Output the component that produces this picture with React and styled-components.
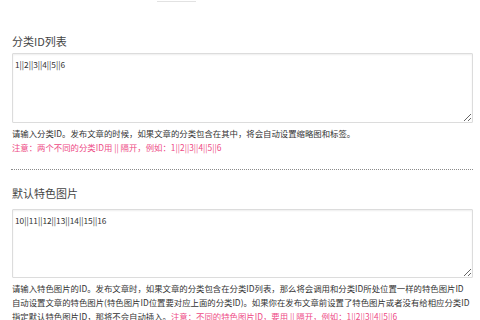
import styled, { createGlobalStyle } from "styled-components"

const GlobalStyle = createGlobalStyle`
	html, body {
		margin: 0;
		padding: 0;
		background: #fff;
	}
	body {
		font-family: "Noto Sans CJK SC", "Noto Sans", sans-serif;
		color: #333;
	}
`

function App() {
	return (
		<Page>
			<GlobalStyle />
			<TopTab />
			<Field>
				<Label $top={32} $gap={5}>分类ID列表</Label>
				<Box defaultValue="1||2||3||4||5||6" $height={70} />
				<Help>
					<Line>请输入分类ID。发布文章的时候，如果文章的分类包含在其中，将会自动设置缩略图和标签。</Line>
					<Line $note>注意：两个不同的分类ID用 || 隔开，例如：1||2||3||4||5||6</Line>
				</Help>
			</Field>
			<Divider />
			<Field>
				<Label $top={16} $gap={9}>默认特色图片</Label>
				<Box defaultValue="10||11||12||13||14||15||16" $height={69} />
				<Help>
					<Line>请输入特色图片的ID。发布文章时，如果文章的分类包含在分类ID列表，那么将会调用和分类ID所处位置一样的特色图片ID</Line>
					<Line>自动设置文章的特色图片(特色图片ID位置要对应上面的分类ID)。如果你在发布文章前设置了特色图片或者没有给相应分类ID</Line>
					<Line>指定默认特色图片ID，那将不会自动插入。<Note>注意：不同的特色图片ID，要用 || 隔开，例如：1||2||3||4||5||6</Note></Line>
				</Help>
			</Field>
		</Page>
	)
}

export default App

const Page = styled.div`
	width: 461px;
	padding: 0 0 0 12px;
`

const TopTab = styled.div`
	width: 39px;
	height: 1px;
	margin-left: 145px;
	border-bottom: 1px solid #e2e2e2;
`

const Field = styled.div`
	display: flex;
	flex-direction: column;
`

const Label = styled.div`
	font-size: 11px;
	line-height: 14px;
	color: #444;
	margin-top: ${p => p.$top}px;
	margin-bottom: ${p => p.$gap}px;
`

const Box = styled.textarea`
	display: block;
	box-sizing: border-box;
	width: 461px;
	height: ${p => p.$height}px;
	margin: 0;
	padding: 3px 2px;
	border: 1px solid #dcdcdc;
	border-radius: 1px;
	box-shadow: inset 0 1px 2px rgba(0, 0, 0, 0.07);
	font-family: "Noto Sans CJK SC", "Noto Sans", sans-serif;
	font-size: 8.3px;
	line-height: 14px;
	color: #333;
	background: #fff;
	outline: none;
`

const Help = styled.div`
	margin-top: 3px;
	font-size: 8.4px;
	line-height: 14px;
`

const Line = styled.div`
	white-space: nowrap;
	color: ${p => p.$note ? "#ee4a85" : "#333"};
`

const Note = styled.span`
	color: #ee4a85;
`

const Divider = styled.div`
	margin-top: 15px;
	margin-left: -1px;
	border-top: 1px dotted #8a8a8a;
`
